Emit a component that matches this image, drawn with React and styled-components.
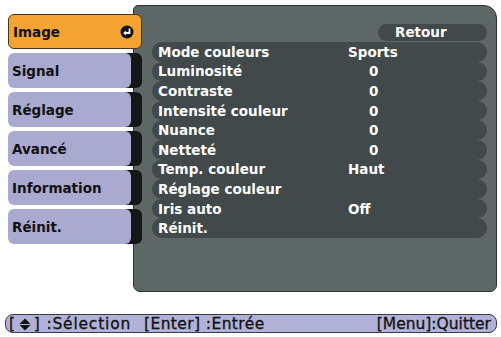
import React from "react";
import styled, { createGlobalStyle } from "styled-components";

const Global = createGlobalStyle`
  html, body { margin: 0; padding: 0; background: #ffffff; }
  body { font-family: "DejaVu Sans", "Liberation Sans", sans-serif; }
`;

const Screen = styled.div`
  width: 501px;
  height: 337px;
  padding-top: 5px;
  box-sizing: border-box;
  display: flex;
  flex-direction: column;
`;

const Main = styled.div`
  display: flex;
  align-items: flex-start;
  padding-left: 8px;
`;

const TabColumn = styled.div`
  display: flex;
  flex-direction: column;
  gap: 4px;
  margin-top: 9px;
  width: 134px;
  margin-right: -9px;
  position: relative;
  z-index: 2;
`;

const Tab = styled.div`
  height: 35px;
  box-sizing: border-box;
  display: flex;
  align-items: center;
  justify-content: space-between;
  padding: 0 7px 0 4px;
  font-size: 13.5px;
  font-weight: bold;
  color: #111;
  border-radius: 6px;
  width: ${(p) => (p.$active ? "134px" : "123px")};
  background: ${(p) => (p.$active ? "#f2a331" : "#aaaad0")};
  border: ${(p) => (p.$active ? "1px solid #4a3414" : "none")};
  box-shadow: ${(p) => (p.$active ? "none" : "11px 0 0 #161616")};
`;

const Panel = styled.div`
  width: 364px;
  height: 287px;
  box-sizing: border-box;
  background: #5d6765;
  border: 1px solid #2c2f2f;
  border-radius: 5px 13px 7px 7px;
  padding: 18px 9px 0 18px;
  display: flex;
  flex-direction: column;
  align-items: stretch;
`;

const BackPill = styled.div`
  align-self: flex-end;
  width: 109px;
  height: 17px;
  box-sizing: border-box;
  border-radius: 9px;
  background: #41494a;
  color: #fff;
  font-size: 13.5px;
  font-weight: bold;
  padding-left: 17px;
  line-height: 17px;
  margin-bottom: 1px;
`;

const RowList = styled.div`
  display: flex;
  flex-direction: column;
`;

const Row = styled.div`
  height: 19.6px;
  border-radius: 10px;
  background: #41494a;
  display: grid;
  grid-template-columns: 190px 1fr;
  align-items: center;
  padding-left: 6px;
  color: #fff;
  font-size: 13.5px;
  font-weight: bold;
  white-space: nowrap;
`;

const Value = styled.span`
  padding-left: ${(p) => (p.$numeric ? "21px" : "0")};
`;

const Footer = styled.div`
  margin: 22px 0 0 5px;
  width: 492px;
  height: 19px;
  box-sizing: border-box;
  background: #b2b2d8;
  border: 1px solid #3a3a4a;
  border-radius: 8px;
  display: grid;
  grid-template-columns: 135px 1fr auto;
  align-items: center;
  padding: 0 5px 0 3px;
  font-size: 15.5px;
  -webkit-text-stroke: 0.3px #111;
  color: #111;
  white-space: nowrap;
`;

const Hint = styled.span`
  display: inline-flex;
  align-items: center;
  letter-spacing: ${(p) => p.$spread || "0"};
`;

const EnterIcon = () => (
  <svg width="14" height="14" viewBox="0 0 14 14">
    <circle cx="7" cy="7" r="6.5" fill="#111" />
    <path d="M9.5 3.5 V8 H4.5" fill="none" stroke="#fff" strokeWidth="1.8" />
    <path d="M5.8 5.6 L3.2 8 L5.8 10.4 Z" fill="#fff" />
  </svg>
);

const UpDown = () => (
  <svg width="12" height="13" viewBox="0 0 12 13" style={{ margin: "0 3px" }}>
    <path d="M6 0.5 L11.5 6 H0.5 Z" fill="#111" />
    <path d="M6 12.5 L11.5 7 H0.5 Z" fill="#111" />
  </svg>
);

const tabs = ["Image", "Signal", "Réglage", "Avancé", "Information", "Réinit."];

const rows = [
  ["Mode couleurs", "Sports", false],
  ["Luminosité", "0", true],
  ["Contraste", "0", true],
  ["Intensité couleur", "0", true],
  ["Nuance", "0", true],
  ["Netteté", "0", true],
  ["Temp. couleur", "Haut", false],
  ["Réglage couleur", "", false],
  ["Iris auto", "Off", false],
  ["Réinit.", "", false],
];

export default function App() {
  return (
    <>
      <Global />
      <Screen>
        <Main>
          <TabColumn>
            {tabs.map((t, i) => (
              <Tab key={t} $active={i === 0}>
                <span>{t}</span>
                {i === 0 && <EnterIcon />}
              </Tab>
            ))}
          </TabColumn>
          <Panel>
            <BackPill>Retour</BackPill>
            <RowList>
              {rows.map(([label, value, numeric]) => (
                <Row key={label}>
                  <span>{label}</span>
                  <Value $numeric={numeric}>{value}</Value>
                </Row>
              ))}
            </RowList>
          </Panel>
        </Main>
        <Footer>
          <Hint $spread="0.8px">
            [<UpDown />]&nbsp;:Sélection
          </Hint>
          <Hint $spread="0.4px">[Enter]&nbsp;:Entrée</Hint>
          <Hint>[Menu]:Quitter</Hint>
        </Footer>
      </Screen>
    </>
  );
}
